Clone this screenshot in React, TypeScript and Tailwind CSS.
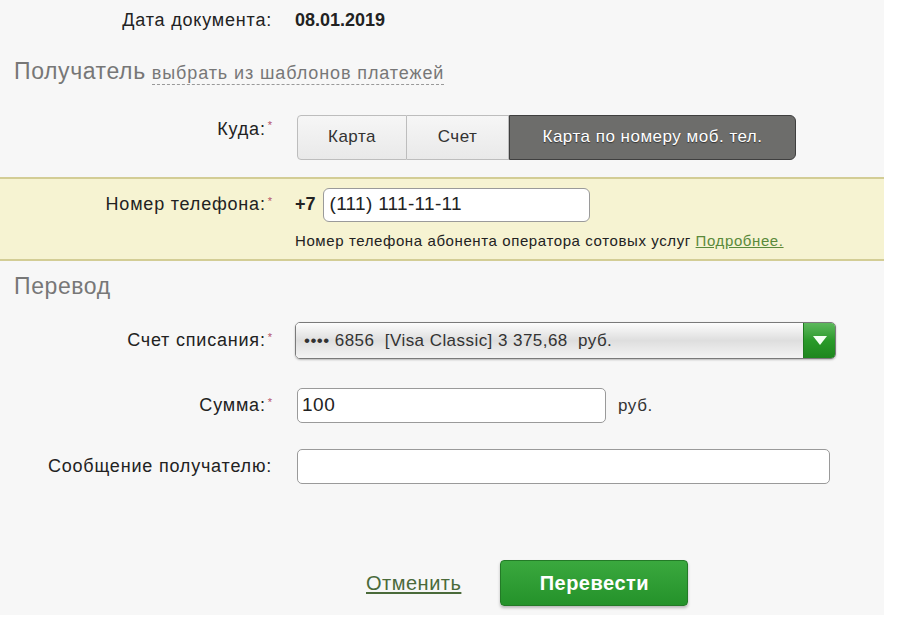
import React from 'react';

const font = { fontFamily: '"Liberation Sans", Arial, sans-serif' };

const Req = () => <sup className="ml-[2px] text-[11px] tracking-normal text-[#b4536a]">*</sup>;

const Row: React.FC<{ label: React.ReactNode; className?: string; children: React.ReactNode }> = ({ label, className = '', children }) => (
  <div className={`flex items-center ${className}`}>
    <div className="w-[272px] shrink-0 text-right text-[18px] tracking-[0.8px] text-[#222]">{label}</div>
    <div className="ml-[23px] flex flex-1 items-center">{children}</div>
  </div>
);

const SectionTitle: React.FC<{ children: React.ReactNode }> = ({ children }) => (
  <div className="pl-[14px] text-[23px] tracking-[0.6px] text-[#777]">{children}</div>
);

export default function App() {
  return (
    <div className="h-[624px] w-[900px] bg-white" style={font}>
      <div className="h-[615px] w-[884px] bg-[#f7f7f7] pt-[8px]">
        <Row label="Дата документа:" className="h-[24px]">
          <span className="text-[18px] font-bold text-[#222]">08.01.2019</span>
        </Row>

        <div className="mt-[22px] flex items-baseline">
          <SectionTitle>Получатель</SectionTitle>
          <span className="ml-[6px] border-b border-dashed border-[#999] text-[18px] leading-[21px] tracking-[0.9px] text-[#777]">
            выбрать из шаблонов платежей
          </span>
        </div>

        <div className="mt-[26px] flex">
          <div className="w-[272px] shrink-0 pt-[1px] text-right text-[18px] tracking-[0.8px] text-[#222]">
            Куда:<Req />
          </div>
          <div className="ml-[25px] flex h-[45px] text-[17px] tracking-[0.5px]">
            <div className="flex w-[110px] items-center justify-center rounded-l-[4px] border border-[#bdbdbd] bg-gradient-to-b from-[#f6f6f6] to-[#e9e9e9] text-[#333]">
              Карта
            </div>
            <div className="flex w-[102px] items-center justify-center border-y border-r border-[#bdbdbd] bg-gradient-to-b from-[#f6f6f6] to-[#e9e9e9] text-[#333]">
              Счет
            </div>
            <div className="flex w-[287px] items-center justify-center rounded-r-[6px] border border-[#3f3f3f] bg-[#6d6d6b] text-white [text-shadow:0_1px_1px_#333]">
              Карта по номеру моб. тел.
            </div>
          </div>
        </div>

        <div className="mt-[17px] h-[84px] border-y-2 border-[#d3cd95] bg-[#f6f3d2] pt-[9px]">
          <Row label={<>Номер телефона:<Req /></>}>
            <span className="text-[18px] font-bold text-[#222]">+7</span>
            <div className="ml-[7px] flex h-[34px] w-[267px] items-center rounded-[6px] border border-[#9a9a9a] bg-white px-[6px] text-[19px] tracking-[0.3px] text-[#222]">
              (111) 111-11-11
            </div>
          </Row>
          <div className="ml-[295px] mt-[8px] text-[15px] tracking-[0.6px] text-[#222]">
            Номер телефона абонента оператора сотовых услуг{' '}
            <span className="text-[#5a8a3a] underline">Подробнее.</span>
          </div>
        </div>

        <div className="mt-[8px]">
          <SectionTitle>Перевод</SectionTitle>
        </div>

        <Row label={<>Счет списания:<Req /></>} className="mt-[19px]">
          <div className="flex h-[37px] w-[541px] overflow-hidden rounded-[5px] border border-[#7a7a7a] shadow-[0_1px_2px_rgba(0,0,0,0.25)]">
            <div className="flex flex-1 items-center bg-gradient-to-b from-[#fdfdfd] via-[#dedede] to-[#f4f4f4] pl-[8px] text-[17px] tracking-[0.45px] text-[#333]">
              •••• 6856&nbsp; [Visa Classic] 3 375,68&nbsp; руб.
            </div>
            <div className="flex w-[32px] items-center justify-center border-l border-[#1f7a1f] bg-gradient-to-b from-[#5cb85c] via-[#2a9a2a] to-[#1d861d]">
              <svg width="14" height="9" viewBox="0 0 14 9">
                <path d="M0 0 L14 0 L7 9 Z" fill="#f4fff4" />
              </svg>
            </div>
          </div>
        </Row>

        <Row label={<>Сумма:<Req /></>} className="mt-[29px]">
          <div className="ml-[2px] flex h-[35px] w-[309px] items-center rounded-[5px] border border-[#9a9a9a] bg-white px-[4px] text-[19px] tracking-[0.5px] text-[#222]">
            100
          </div>
          <span className="ml-[12px] text-[17px] tracking-[0.6px] text-[#333]">руб.</span>
        </Row>

        <Row label="Сообщение получателю:" className="mt-[26px]">
          <div className="ml-[2px] h-[35px] w-[533px] rounded-[5px] border border-[#9a9a9a] bg-white" />
        </Row>

        <div className="mt-[76px] flex items-center">
          <span className="ml-[366px] text-[20px] tracking-[0.5px] text-[#4a6a3a] underline underline-offset-2">Отменить</span>
          <div className="ml-[39px] flex h-[46px] w-[188px] items-center justify-center rounded-[4px] border border-[#237a27] bg-gradient-to-b from-[#3aa83e] to-[#24922a] text-[20px] font-bold tracking-[0.5px] text-white shadow-[0_2px_3px_rgba(0,0,0,0.25)]">
            Перевести
          </div>
        </div>
      </div>
    </div>
  );
}
